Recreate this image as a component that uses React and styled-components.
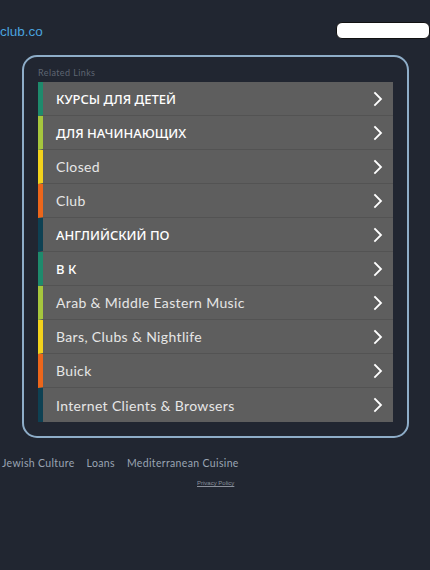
import React from "react";
import styled, { createGlobalStyle } from "styled-components";

const Global = createGlobalStyle`
  html, body { margin: 0; padding: 0; background: #212631; }
  body { font-family: "Lato", "Noto Sans", sans-serif; }
`;

const Page = styled.div`
  width: 430px;
  min-height: 570px;
  background: #212631;
  overflow: hidden;
`;

const Header = styled.header`
  display: flex;
  justify-content: space-between;
  align-items: center;
  height: 60px;
  box-sizing: border-box;
`;

const Domain = styled.div`
  font-family: "Liberation Sans", Arial, sans-serif;
  font-size: 13.5px;
  color: #4aa3df;
  margin-top: 2px;
`;

const Search = styled.div`
  width: 92px;
  height: 15px;
  background: #fff;
  border: 1px solid #111;
  border-radius: 6px;
`;

const Panel = styled.section`
  margin: -5px 0 0 22px;
  width: 387px;
  box-sizing: border-box;
  border: 2px solid #8eadc8;
  border-radius: 15px;
  padding: 10px 14px 14px 14px;
`;

const Title = styled.div`
  font-family: "Lato", sans-serif;
  font-size: 9px;
  color: #5e6572;
  letter-spacing: 0.4px;
  margin-bottom: 4px;
`;

const List = styled.ul`
  list-style: none;
  margin: 0;
  padding: 0;
`;

const Row = styled.li`
  display: flex;
  align-items: center;
  height: 34px;
  box-sizing: border-box;
  background: #5e5e5e;
  border-left: 5px solid ${(p) => p.$bar};
  border-bottom: 1px solid #535353;
  padding: 0 10px 0 13px;
  &:last-child { border-bottom: none; }
`;

const Label = styled.span`
  flex: 1;
  font-family: ${(p) => (p.$caps ? '"Noto Sans", "Open Sans", sans-serif' : '"Lato", sans-serif')};
  font-weight: ${(p) => (p.$caps ? 500 : 400)};
  font-size: ${(p) => (p.$caps ? "13px" : "14px")};
  letter-spacing: ${(p) => (p.$caps ? "0" : "0.35px")};
  color: ${(p) => (p.$caps ? "#ffffff" : "#e6e6e6")};
`;

const Chevron = () => (
  <svg width="10" height="16" viewBox="0 0 10 16" fill="none">
    <path d="M2 2l6 6-6 6" stroke="#fff" strokeWidth="1.8" strokeLinecap="square" />
  </svg>
);

const Footer = styled.nav`
  display: flex;
  gap: 12px;
  padding: 19px 0 0 2px;
`;

const FootLink = styled.span`
  font-family: "Lato", sans-serif;
  font-size: 10.5px;
  letter-spacing: 0.35px;
  color: #9aa4b3;
`;

const Privacy = styled.div`
  margin: 11px 0 0 197px;
  font-family: "Liberation Sans", Arial, sans-serif;
  font-size: 6px;
  color: #8a909b;
  text-decoration: underline;
`;

const colors = ["#1e8a6c", "#a6c63d", "#f2d21c", "#ec661b", "#0e4153"];
const items = [
  ["КУРСЫ ДЛЯ ДЕТЕЙ", true],
  ["ДЛЯ НАЧИНАЮЩИХ", true],
  ["Closed", false],
  ["Club", false],
  ["АНГЛИЙСКИЙ ПО", true],
  ["В К", true],
  ["Arab & Middle Eastern Music", false],
  ["Bars, Clubs & Nightlife", false],
  ["Buick", false],
  ["Internet Clients & Browsers", false],
];

export default function App() {
  return (
    <Page>
      <Global />
      <Header>
        <Domain>club.co</Domain>
        <Search />
      </Header>
      <Panel>
        <Title>Related Links</Title>
        <List>
          {items.map(([t, caps], i) => (
            <Row key={i} $bar={colors[i % 5]}>
              <Label $caps={caps}>{t}</Label>
              <Chevron />
            </Row>
          ))}
        </List>
      </Panel>
      <Footer>
        <FootLink>Jewish Culture</FootLink>
        <FootLink>Loans</FootLink>
        <FootLink>Mediterranean Cuisine</FootLink>
      </Footer>
      <Privacy>Privacy Policy</Privacy>
    </Page>
  );
}
